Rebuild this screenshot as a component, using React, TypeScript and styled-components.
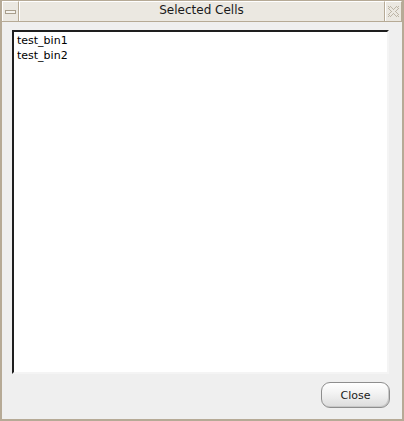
import React from "react";
import styled, { createGlobalStyle } from "styled-components";

const Global = createGlobalStyle`
  html, body { margin: 0; padding: 0; background: #efefef; }
  body { font-family: "DejaVu Sans", sans-serif; }
`;

const Frame = styled.div`
  width: 404px;
  height: 421px;
  box-sizing: border-box;
  border: 2px solid #b6aa96;
  border-top: 1px solid #b6aa96;
  background: #efefef;
  display: flex;
  flex-direction: column;
`;

const TitleBar = styled.div`
  height: 20px;
  display: flex;
  background: #ebe8e1;
  border-bottom: 1px solid #b6aa96;
`;

const TitleButton = styled.div`
  width: 17px;
  box-sizing: border-box;
  border-left: 1px solid #ffffff;
  border-top: 1px solid #ffffff;
  border-right: 1px solid #b6aa96;
  display: flex;
  align-items: center;
  justify-content: center;
  background: #ebe8e1;
`;

const TitleText = styled.div`
  flex: 1;
  box-sizing: border-box;
  border-left: 1px solid #ffffff;
  border-top: 1px solid #ffffff;
  border-right: 1px solid #b6aa96;
  font-size: 12px;
  color: #1a1a1a;
  display: flex;
  align-items: center;
  justify-content: center;
  padding-bottom: 3px;
  padding-right: 1px;
`;

const MinBar = styled.div`
  width: 9px;
  height: 2px;
  border: 1px solid #a89e8c;
  background: #f5f3ee;
`;

const Body = styled.div`
  flex: 1;
  display: flex;
  flex-direction: column;
  padding: 8px 12px 11px 10px;
`;

const ListBox = styled.div`
  flex: 1;
  box-sizing: border-box;
  margin-right: 1px;
  background: #ffffff;
  border-top: 2px solid #1e1e1e;
  border-left: 2px solid #1e1e1e;
  border-right: 2px solid #f4f4f4;
  border-bottom: 2px solid #f4f4f4;
  padding: 1px 3px;
`;

const ListItem = styled.div`
  font-size: 11px;
  line-height: 15px;
  color: #000;
`;

const Footer = styled.div`
  display: flex;
  justify-content: flex-end;
  padding-top: 8px;
`;

const Button = styled.button`
  width: 69px;
  height: 26px;
  border: 1px solid #8e8e8e;
  border-radius: 9px;
  background: linear-gradient(#ffffff 0%, #f2f2f2 45%, #dcdcdc 100%);
  font-family: "DejaVu Sans", sans-serif;
  font-size: 11px;
  color: #1a1a1a;
  padding: 0;
  box-shadow: inset -1px -1px 0 #c8c8c8;
`;

const xPixels: [number, number][] = [
  [0, 0], [2, 0], [8, 0], [10, 0],
  [1, 1], [3, 1], [7, 1], [9, 1],
  [0, 2], [4, 2], [6, 2], [10, 2],
  [1, 3], [5, 3], [9, 3],
  [2, 4], [8, 4],
  [3, 5], [7, 5],
  [2, 6], [8, 6],
  [1, 7], [5, 7], [9, 7],
  [0, 8], [4, 8], [6, 8], [10, 8],
  [1, 9], [3, 9], [7, 9], [9, 9],
  [0, 10], [2, 10], [8, 10], [10, 10],
];

function CloseIcon() {
  return (
    <svg width="11" height="11" viewBox="0 0 11 11">
      <g fill="#bdb5a6">
        {xPixels.map(([x, y]) => (
          <rect key={`${x}-${y}`} x={x} y={y} width="1" height="1" />
        ))}
      </g>
    </svg>
  );
}

export default function App() {
  return (
    <>
      <Global />
      <Frame>
        <TitleBar>
          <TitleButton>
            <MinBar />
          </TitleButton>
          <TitleText>Selected Cells</TitleText>
          <TitleButton>
            <CloseIcon />
          </TitleButton>
        </TitleBar>
        <Body>
          <ListBox>
            <ListItem>test_bin1</ListItem>
            <ListItem>test_bin2</ListItem>
          </ListBox>
          <Footer>
            <Button>Close</Button>
          </Footer>
        </Body>
      </Frame>
    </>
  );
}
